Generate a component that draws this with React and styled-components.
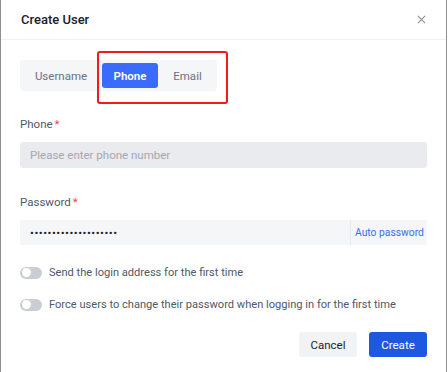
import React, { useState } from 'react'
import styled, { createGlobalStyle } from 'styled-components'

const Global = createGlobalStyle`
  html, body { margin: 0; padding: 0; background: #fff; }
  body { font-family: Roboto, "Liberation Sans", sans-serif; }
  * { box-sizing: border-box; }
`

const Dialog = styled.div`
  width: 447px;
  height: 372px;
  background: #fff;
  border-left: 1px solid #8f8f8f;
  border-right: 1px solid #8f8f8f;
  display: flex;
  flex-direction: column;
`

const Header = styled.div`
  height: 40px;
  padding: 0 19px 0 20px;
  display: flex;
  align-items: center;
  justify-content: space-between;
  border-bottom: 1px solid #f0f1f3;
`

const Title = styled.h1`
  margin: 0;
  font-size: 13px;
  font-weight: 500;
  color: #1d2129;
`

const Close = styled.button`
  border: 0;
  background: none;
  padding: 0;
  width: 12px;
  height: 12px;
  display: flex;
  align-items: center;
  justify-content: center;
  cursor: pointer;
`

const Body = styled.div`
  padding: 20px 19px 0 19px;
  display: flex;
  flex-direction: column;
`

const SegWrap = styled.div`
  position: relative;
  align-self: flex-start;
`

const Segmented = styled.div`
  display: flex;
  gap: 3px;
  padding: 3px;
  background: #f5f6f8;
  border-radius: 4px;
  width: 197px;
  height: 31px;
`

const Segment = styled.button`
  border: 0;
  height: 25px;
  width: ${p => p.$w}px;
  padding: 0;
  border-radius: 3px;
  font-family: inherit;
  font-size: 11.5px;
  font-weight: ${p => (p.$active ? 600 : 400)};
  color: ${p => (p.$active ? '#fff' : '#6b7280')};
  background: ${p => (p.$active ? '#3a6bfd' : 'transparent')};
  cursor: pointer;
`

const Highlight = styled.div`
  position: absolute;
  left: 77px;
  top: -9px;
  width: 131px;
  height: 53px;
  border: 2px solid #f31a1a;
  border-radius: 3px;
  pointer-events: none;
`

const Field = styled.div`
  display: flex;
  flex-direction: column;
  margin-top: ${p => p.$top}px;
`

const Label = styled.label`
  font-size: 11.5px;
  line-height: 18px;
  color: #4e5969;
  margin-bottom: 9px;
  & span { color: #f53f3f; margin-left: 2px; }
`

const Input = styled.input`
  height: 26px;
  border: 0;
  border-radius: 3px;
  background: ${p => p.$bg};
  padding: 0 10px;
  font-family: inherit;
  font-size: 11.5px;
  color: #1d2129;
  outline: none;
  width: 100%;
  &::placeholder { color: #a3a7ae; }
`

const PassRow = styled.div`
  display: flex;
  height: 25px;
  background: #f5f6f8;
  border-radius: 3px;
  overflow: hidden;
`

const PassInput = styled(Input)`
  flex: 1;
  min-width: 0;
  height: 25px;
  font-size: 11.5px;
  letter-spacing: 0.5px;
`

const Suffix = styled.button`
  border: 0;
  border-left: 1px solid #e9eaed;
  background: #f5f6f8;
  width: 77px;
  flex-shrink: 0;
  padding: 0 0 0 4px;
  text-align: left;
  white-space: nowrap;
  font-family: inherit;
  font-size: 10.3px;
  color: #3a6cf0;
  cursor: pointer;
`

const SwitchRow = styled.div`
  display: flex;
  align-items: center;
  gap: 7px;
  margin-top: ${p => p.$top}px;
  font-size: 11.1px;
  color: #4e5969;
  white-space: nowrap;
`

const Switch = styled.span`
  width: 22px;
  height: 12px;
  border-radius: 6px;
  background: #c9cdd4;
  position: relative;
  flex-shrink: 0;
  &::after {
    content: '';
    position: absolute;
    left: 1.5px;
    top: 1.5px;
    width: 9px;
    height: 9px;
    border-radius: 50%;
    background: #fff;
  }
`

const Footer = styled.div`
  display: flex;
  justify-content: flex-end;
  gap: 12px;
  margin-top: 21px;
`

const Button = styled.button`
  width: 58px;
  height: 25px;
  border: 0;
  border-radius: 3px;
  font-family: inherit;
  font-size: 11.5px;
  color: ${p => (p.$primary ? '#fff' : '#1d2129')};
  background: ${p => (p.$primary ? '#1f58e0' : '#f2f3f5')};
  cursor: pointer;
`

export default function App() {
  const [tab, setTab] = useState('phone')
  const tabs = [
    { id: 'username', label: 'Username', w: 76 },
    { id: 'phone', label: 'Phone', w: 56 },
    { id: 'email', label: 'Email', w: 53 },
  ]
  return (
    <>
      <Global />
      <Dialog>
        <Header>
          <Title>Create User</Title>
          <Close aria-label="close">
            <svg width="9" height="9" viewBox="0 0 10 10">
              <path d="M1 1L9 9M9 1L1 9" stroke="#86909c" strokeWidth="1.2" />
            </svg>
          </Close>
        </Header>
        <Body>
          <SegWrap>
            <Segmented>
              {tabs.map(t => (
                <Segment key={t.id} $w={t.w} $active={tab === t.id} onClick={() => setTab(t.id)}>
                  {t.label}
                </Segment>
              ))}
            </Segmented>
            <Highlight />
          </SegWrap>
          <Field $top={24}>
            <Label>Phone<span>*</span></Label>
            <Input $bg="#eaebee" placeholder="Please enter phone number" />
          </Field>
          <Field $top={25}>
            <Label>Password<span>*</span></Label>
            <PassRow>
              <PassInput $bg="#f5f6f8" type="password" defaultValue="abcdefghijklmnopqrst" />
              <Suffix>Auto password</Suffix>
            </PassRow>
          </Field>
          <SwitchRow $top={21}>
            <Switch />
            Send the login address for the first time
          </SwitchRow>
          <SwitchRow $top={19}>
            <Switch />
            Force users to change their password when logging in for the first time
          </SwitchRow>
          <Footer>
            <Button>Cancel</Button>
            <Button $primary>Create</Button>
          </Footer>
        </Body>
      </Dialog>
    </>
  )
}
